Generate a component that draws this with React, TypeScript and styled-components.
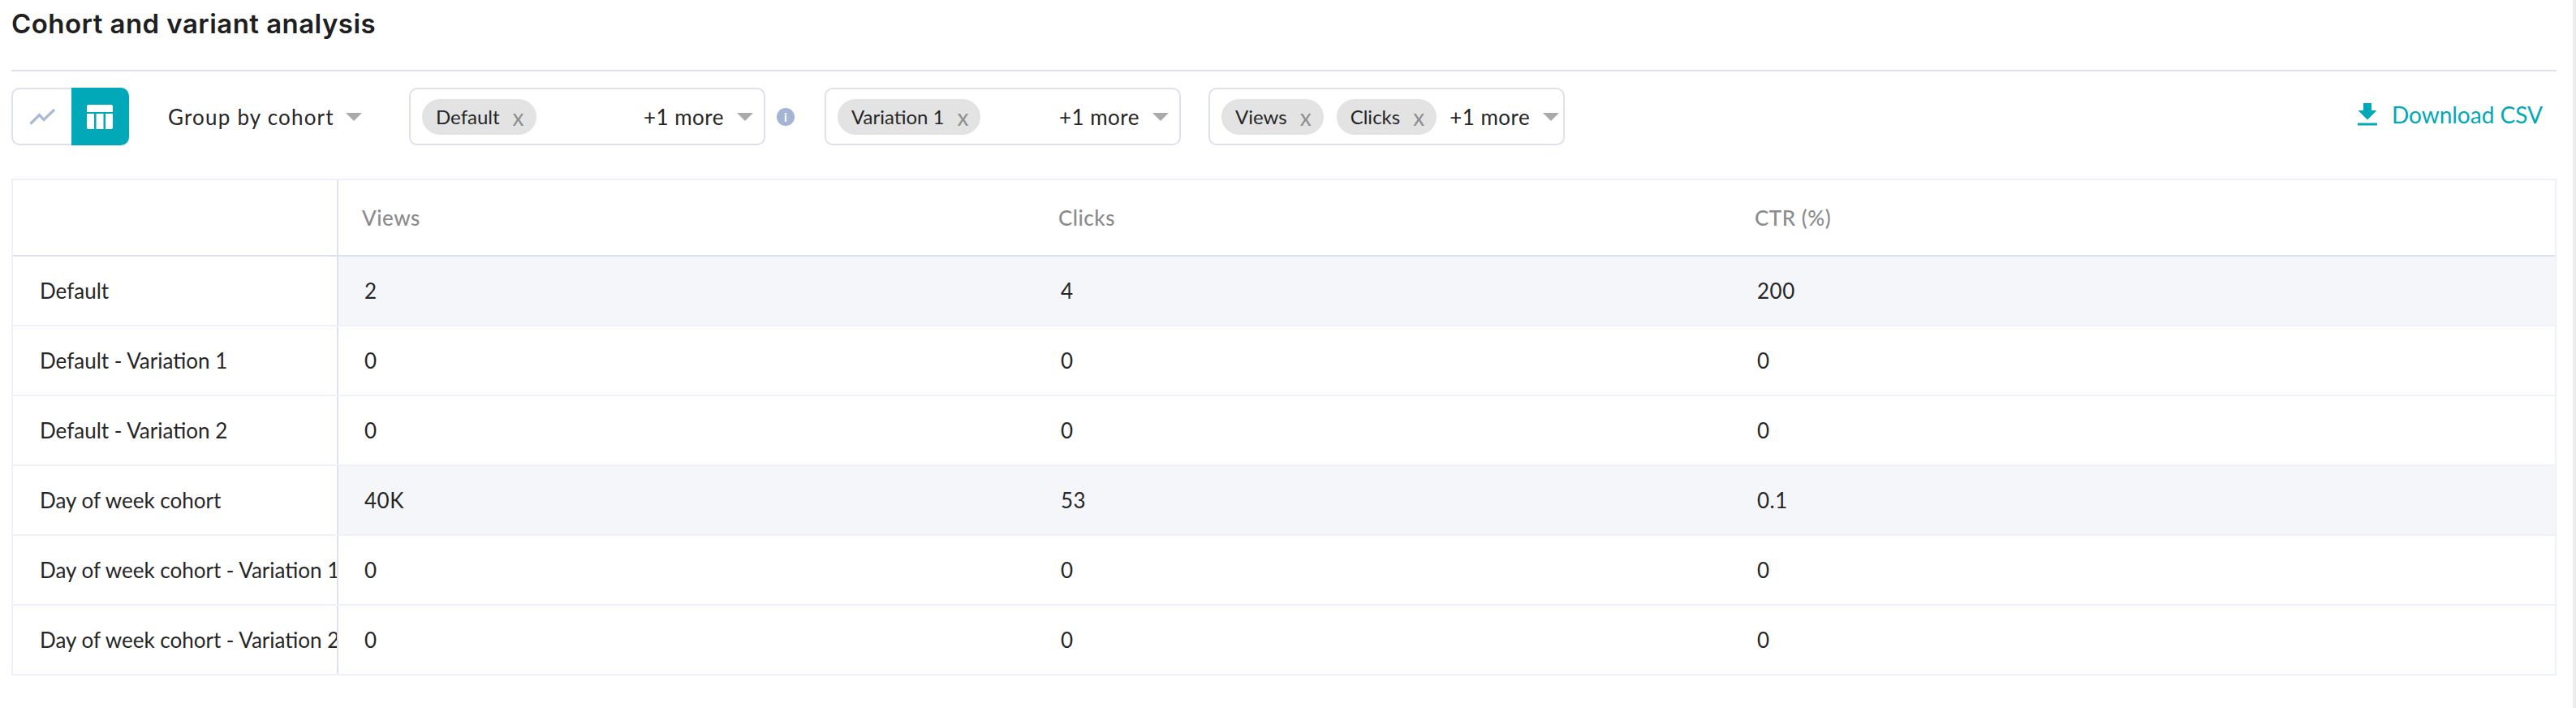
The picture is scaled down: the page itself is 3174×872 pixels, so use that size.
import React from 'react'
import styled, { createGlobalStyle } from 'styled-components'

const FONT = `Lato, 'Noto Sans', sans-serif`

const columns = ['Views', 'Clicks', 'CTR (%)']

const rows = [
  { name: 'Default', values: ['2', '4', '200'], striped: true },
  { name: 'Default - Variation 1', values: ['0', '0', '0'], striped: false },
  { name: 'Default - Variation 2', values: ['0', '0', '0'], striped: false },
  { name: 'Day of week cohort', values: ['40K', '53', '0.1'], striped: true },
  { name: 'Day of week cohort - Variation 1', values: ['0', '0', '0'], striped: false },
  { name: 'Day of week cohort - Variation 2', values: ['0', '0', '0'], striped: false },
]

const filters = [
  { chips: ['Default'], info: true },
  { chips: ['Variation 1'], info: false },
  { chips: ['Views', 'Clicks'], info: false },
]

export default function App() {
  return (
    <>
      <GlobalStyle />
      <Page>
        <Content>
          <Title>Cohort and variant analysis</Title>
          <Toolbar>
            <Toggle>
              <ToggleBtn $active={false}>
                <svg width="32" height="20" viewBox="0 0 32 20" fill="none">
                  <path d="M1.500 18.500 L12.500 7.500 L18 13.500 L31 1" stroke="#a9b8d8" strokeWidth="3.200" />
                </svg>
              </ToggleBtn>
              <ToggleBtn $active>
                <svg width="32" height="30" viewBox="0 0 32 30" fill="#fff">
                  <path d="M2 0h28a2 2 0 0 1 2 2v7H0V2a2 2 0 0 1 2-2z" />
                  <path d="M0 11h9v19H2a2 2 0 0 1-2-2z" />
                  <rect x="11.500" y="11" width="9" height="19" />
                  <path d="M23 11h9v17a2 2 0 0 1-2 2h-7z" />
                </svg>
              </ToggleBtn>
            </Toggle>
            <GroupBy>
              Group by cohort
              <Caret />
            </GroupBy>
            {filters.map((filter) => (
              <FilterWrap key={filter.chips[0]} $info={filter.info}>
                <Select>
                  {filter.chips.map((chip) => (
                    <Chip key={chip}>
                      {chip}
                      <ChipClose>x</ChipClose>
                    </Chip>
                  ))}
                  <More>+1 more</More>
                  <Caret />
                </Select>
                {filter.info && <InfoDot>i</InfoDot>}
              </FilterWrap>
            ))}
            <Download>
              <svg width="24" height="28" viewBox="0 0 24 28" fill="#00a8b8">
                <path d="M7 0h10v9h6.500L12 20.500 0.500 9H7z" />
                <rect x="0" y="24.500" width="24" height="3" />
              </svg>
              Download CSV
            </Download>
          </Toolbar>
          <Table>
            <Row $head>
              <NameCell />
              {columns.map((col) => (
                <HeadCell key={col}>{col}</HeadCell>
              ))}
            </Row>
            {rows.map((row) => (
              <Row key={row.name}>
                <NameCell>{row.name}</NameCell>
                {row.values.map((value, i) => (
                  <ValueCell key={columns[i]} $striped={row.striped}>
                    {value}
                  </ValueCell>
                ))}
              </Row>
            ))}
          </Table>
        </Content>
        <ScrollTrack />
      </Page>
    </>
  )
}

const GlobalStyle = createGlobalStyle`
  html, body {
    margin: 0;
    padding: 0;
    background: #fff;
  }
  * {
    box-sizing: border-box;
  }
`

const Page = styled.div`
  display: flex;
  height: 872px;
  overflow: hidden;
  font-family: ${FONT};
  font-size: 26px;
  color: #262626;
`

const Content = styled.div`
  flex: 1;
  min-width: 0;
  padding: 0 20px 0 14px;
`

const ScrollTrack = styled.div`
  width: 4px;
  background: #ececec;
`

const Title = styled.h2`
  margin: 0;
  height: 88px;
  padding-top: 9px;
  border-bottom: 2px solid #dde1ef;
  font-family: Inter, ${FONT};
  font-size: 33px;
  line-height: 40px;
  font-weight: 600;
  letter-spacing: 0.450px;
  color: #1f1f1f;
`

const Toolbar = styled.div`
  display: flex;
  align-items: center;
  height: 71px;
  margin-top: 20px;
`

const Toggle = styled.div`
  display: flex;
  flex-shrink: 0;
  width: 145px;
  height: 71px;
`

const ToggleBtn = styled.div<{ $active: boolean }>`
  flex: 1;
  display: flex;
  align-items: center;
  justify-content: center;
  background: ${({ $active }) => ($active ? '#00a8b8' : '#fff')};
  border: ${({ $active }) => ($active ? 'none' : '2px solid #dde1ef')};
  border-right: none;
  border-radius: ${({ $active }) => ($active ? '0 10px 10px 0' : '10px 0 0 10px')};
`

const GroupBy = styled.div`
  display: flex;
  flex-shrink: 0;
  align-items: center;
  gap: 14px;
  width: 297px;
  margin-left: 48px;
  letter-spacing: 1.200px;
  white-space: nowrap;
`

const Caret = styled.span`
  flex-shrink: 0;
  width: 0;
  height: 0;
  border-left: 10px solid transparent;
  border-right: 10px solid transparent;
  border-top: 10px solid #aaa;
`

const FilterWrap = styled.div<{ $info: boolean }>`
  display: flex;
  flex-shrink: 0;
  align-items: center;
  gap: 14px;
  margin-right: ${({ $info }) => ($info ? '37px' : '34px')};
`

const Select = styled.div`
  display: flex;
  align-items: center;
  gap: 16px;
  width: 439px;
  height: 71px;
  padding: 0 13px 0 14px;
  border: 2px solid #dde1ef;
  border-radius: 10px;
  background: #fff;
`

const Chip = styled.span`
  display: inline-flex;
  align-items: center;
  height: 44px;
  padding: 0 15px 0 17px;
  border-radius: 22px;
  background: #e3e3e3;
  font-size: 24px;
  white-space: nowrap;
`

const ChipClose = styled.span`
  margin-left: 16px;
  font-size: 28px;
  line-height: 1;
  color: #8f8f8f;
`

const More = styled.span`
  margin-left: auto;
  letter-spacing: 0.500px;
  white-space: nowrap;
`

const InfoDot = styled.span`
  display: flex;
  align-items: center;
  justify-content: center;
  width: 22px;
  height: 22px;
  border-radius: 50%;
  background: #a3b4d6;
  color: #fff;
  font-size: 15px;
  font-weight: 700;
`

const Download = styled.div`
  display: flex;
  align-items: center;
  gap: 18px;
  margin-left: auto;
  padding: 0 17px 6px 0;
  font-size: 28px;
  color: #00a8b8;
  white-space: nowrap;
`

const Table = styled.div`
  margin-top: 41px;
  border: 2px solid #eef1f7;
  box-shadow: 0 -3px 8px rgba(0, 0, 0, 0.012);
`

const Row = styled.div<{ $head?: boolean }>`
  display: grid;
  grid-template-columns: 401px 858px 858px 1fr;
  height: ${({ $head }) => ($head ? '94px' : '86px')};
  border-bottom: 2px solid ${({ $head }) => ($head ? '#dde1ef' : '#eef1f7')};

  &:last-child {
    border-bottom: none;
    height: 84px;
  }
`

const NameCell = styled.div`
  display: flex;
  align-items: center;
  overflow: hidden;
  padding-left: 33px;
  border-right: 2px solid #dde1ef;
  white-space: nowrap;
`

const HeadCell = styled.div`
  display: flex;
  align-items: center;
  padding-left: 29px;
  letter-spacing: 0.500px;
  font-weight: 500;
  color: #8c8c8c;
`

const ValueCell = styled.div<{ $striped: boolean }>`
  display: flex;
  align-items: center;
  padding-left: 32px;
  letter-spacing: 0.500px;
  background: ${({ $striped }) => ($striped ? '#f5f6fa' : '#fff')};
`
